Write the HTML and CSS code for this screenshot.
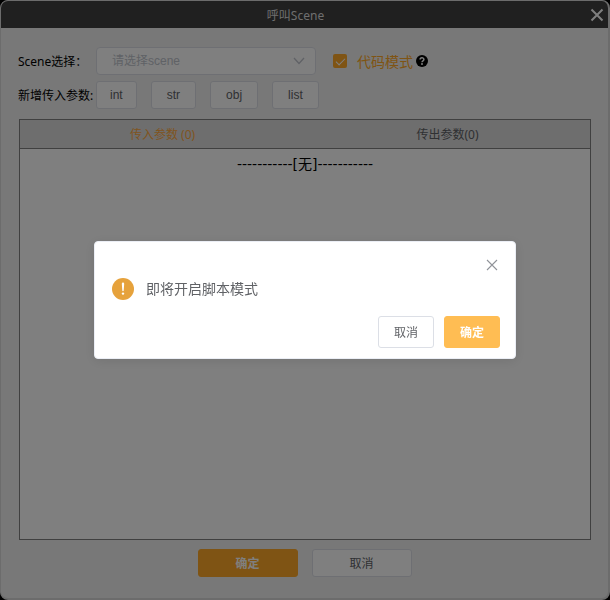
FILE: index.html
```html
<!DOCTYPE html>
<html lang="zh-CN">
<head>
    <meta charset="UTF-8">
    <meta name="viewport" content="width=device-width, initial-scale=1.0">
    <title>呼叫Scene</title>
    <link rel="stylesheet" href="styles.css">
</head>
<body>
    <div class="window">
        <header class="title-bar">
            <h1>呼叫Scene</h1>
            <button class="window-close" type="button" aria-label="关闭">
                <svg width="14" height="14" viewBox="0 0 14 14"><path d="M1.5 1.5l11 11M12.5 1.5l-11 11" fill="none" stroke="currentColor" stroke-width="2"/></svg>
            </button>
        </header>

        <main class="content">
            <div class="row">
                <label class="row-label" for="scene">Scene选择：</label>
                <div class="select-box">
                    <select id="scene" class="select">
                        <option>请选择scene</option>
                    </select>
                    <svg class="arrow" width="12" height="8" viewBox="0 0 12 8"><path d="M1 1l5 5.5L11 1" fill="none" stroke="currentColor" stroke-width="1.3"/></svg>
                </div>
                <label class="code-mode"><input type="checkbox" checked>代码模式</label>
                <svg class="help" width="12" height="12" viewBox="0 0 12 12"><circle cx="6" cy="6" r="6" fill="#000"/><path d="M4.1 4.6C4.1 2.3 7.9 2.3 7.9 4.5C7.9 5.9 6 5.8 6 7.3" fill="none" stroke="#fff" stroke-width="1.5"/><circle cx="6" cy="9.1" r="1" fill="#fff"/></svg>
            </div>

            <div class="row">
                <span class="row-label">新增传入参数:</span>
                <div class="types">
                    <button class="btn type" type="button">int</button>
                    <button class="btn type" type="button">str</button>
                    <button class="btn type" type="button">obj</button>
                    <button class="btn type" type="button">list</button>
                </div>
            </div>

            <section class="params">
                <div class="tabs" role="tablist">
                    <button class="tab active" type="button" role="tab" aria-selected="true">传入参数 (0)</button>
                    <button class="tab" type="button" role="tab" aria-selected="false">传出参数(0)</button>
                </div>
                <p class="empty">-----------[无]-----------</p>
            </section>
        </main>

        <footer class="footer">
            <button class="btn wide primary" type="button">确定</button>
            <button class="btn wide" type="button">取消</button>
        </footer>
    </div>

    <!-- Confirm dialog -->
    <div class="overlay">
        <div class="dialog" role="dialog" aria-modal="true" aria-labelledby="dialog-message">
            <div class="dialog-header">
                <button class="dialog-close" type="button" aria-label="关闭">
                    <svg width="12" height="12" viewBox="0 0 12 12"><path d="M1 1l10 10M11 1L1 11" fill="none" stroke="currentColor" stroke-width="1.1"/></svg>
                </button>
            </div>
            <div class="dialog-body">
                <svg width="22" height="22" viewBox="0 0 22 22"><circle cx="11" cy="11" r="11" fill="#e6a23c"/><path d="M9.8 5.8a1.2 1.2 0 0 1 2.4 0l-.5 6.7a.7.7 0 0 1-1.4 0z" fill="#fff"/><circle cx="11" cy="15.6" r="1.2" fill="#fff"/></svg>
                <p id="dialog-message">即将开启脚本模式</p>
            </div>
            <div class="dialog-footer">
                <button class="btn small" type="button">取消</button>
                <button class="btn small confirm" type="button">确定</button>
            </div>
        </div>
    </div>
</body>
</html>
```

FILE: styles.css
```css
* {
    box-sizing: border-box;
}
body {
    margin: 0;
    background: #000;
    color: #000;
    font-family: "Noto Sans", "Noto Sans CJK SC", sans-serif;
    font-size: 12px;
}
button, select {
    font-family: "Liberation Sans", "Noto Sans CJK SC", sans-serif;
    font-size: 12px;
}
.window {
    display: flex;
    flex-direction: column;
    height: 100vh;
    border: 2px solid #fff;
    border-width: 1px 2px 2px 1px;
    border-color: #d8d8d8;
    border-radius: 8px;
    background: #f0f0f0;
    overflow: hidden;
}
.title-bar {
    display: flex;
    align-items: center;
    height: 27px;
    padding: 0 4px;
    background: #404040;
    color: #fff;
}
.title-bar h1 {
    flex: 1;
    margin: 0;
    padding-right: 4px;
    color: #ddd;
    font-size: 12px;
    font-weight: normal;
    text-align: center;
}
.window-close, .dialog-close {
    display: flex;
    padding: 0;
    border: none;
    background: none;
    color: inherit;
    cursor: pointer;
}
.content {
    flex: 1;
    display: flex;
    flex-direction: column;
    padding: 19px 17px 0;
}
.row {
    display: flex;
    align-items: center;
    height: 28px;
    margin-bottom: 6px;
}
.row-label {
    width: 78px;
    white-space: nowrap;
}
.select-box {
    position: relative;
    width: 220px;
}
.select {
    appearance: none;
    width: 100%;
    height: 28px;
    padding: 0 30px 0 15px;
    border: 1px solid #dcdfe6;
    border-radius: 4px;
    background: #fff;
    color: #c0c4cc;
}
.arrow {
    position: absolute;
    top: 10px;
    right: 11px;
    color: #c0c4cc;
    pointer-events: none;
}
.code-mode {
    display: flex;
    align-items: center;
    gap: 10px;
    margin: 0 3px 0 17px;
    color: #ffa928;
    font-size: 14px;
}
.code-mode input {
    appearance: none;
    display: grid;
    place-items: center;
    width: 14px;
    height: 14px;
    margin: 0;
    border-radius: 2px;
    background: #ffa928;
}
.code-mode input:checked::after {
    content: "";
    width: 4px;
    height: 8px;
    margin-bottom: 2px;
    border: solid #fff;
    border-width: 0 1px 1px 0;
    transform: rotate(45deg);
}
.types {
    display: flex;
    gap: 14px;
}
.btn {
    height: 28px;
    padding: 0 15px;
    border: 1px solid #dcdfe6;
    border-radius: 3px;
    background: #fff;
    color: #606266;
    cursor: pointer;
}
.type:first-child {
    padding: 0 13px;
}
.params {
    flex: 1;
    margin: 4px 0 0 1px;
    border: 1px solid #808080;
    background: #fff;
}
.tabs {
    display: flex;
    height: 29px;
    border-bottom: 1px solid #808080;
    background: #dcdcdc;
}
.tab {
    flex: 1;
    padding: 0;
    border: none;
    background: none;
    color: #606266;
    font-family: "Noto Sans", "Noto Sans CJK SC", sans-serif;
    cursor: pointer;
}
.tab.active {
    color: #ffa940;
}
.empty {
    margin: 6px 0 0;
    font-family: "DejaVu Sans", "Noto Sans CJK SC", sans-serif;
    font-size: 14px;
    line-height: 18px;
    text-align: center;
}
.footer {
    display: flex;
    justify-content: center;
    gap: 14px;
    padding: 9px 0 21px;
}
.wide, .small {
    padding: 0 0 2px;
}
.wide {
    width: 100px;
}
.primary {
    border-color: #ffa928;
    background: #ffa928;
    color: #fff;
    font-weight: bold;
}
.overlay {
    position: fixed;
    inset: 0;
    display: flex;
    align-items: center;
    justify-content: center;
    background: rgba(0, 0, 0, 0.5);
}
.dialog {
    width: 422px;
    max-width: 90%;
    padding: 17px 15px 10px 17px;
    border: 1px solid #ebeef5;
    border-radius: 4px;
    background: #fff;
    box-shadow: 0 2px 12px rgba(0, 0, 0, 0.1);
    color: #606266;
}
.dialog-header {
    display: flex;
    justify-content: flex-end;
    padding-right: 2px;
    color: #909399;
}
.dialog-body {
    display: flex;
    align-items: center;
    gap: 12px;
    padding: 7px 0 16px;
    font-size: 14px;
}
.dialog-body p {
    margin: 0;
    line-height: 22px;
}
.dialog-footer {
    display: flex;
    justify-content: flex-end;
    gap: 10px;
}
.small {
    width: 56px;
    height: 32px;
}
.confirm {
    border-color: #ffbd53;
    background: #ffbd53;
    color: #fff;
    font-weight: bold;
}
```
